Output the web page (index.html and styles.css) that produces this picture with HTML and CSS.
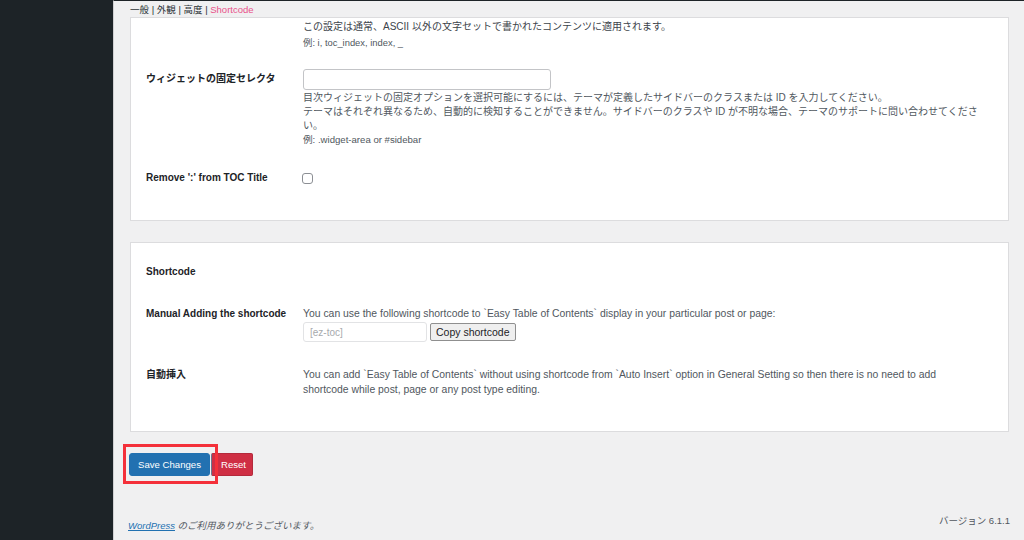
FILE: index.html
```html
<!DOCTYPE html>
<html lang="ja">
<head>
<meta charset="utf-8">
<title>Easy Table of Contents - Shortcode</title>
<link rel="stylesheet" href="styles.css">
</head>
<body>
<aside class="sidebar"></aside>
<main class="main">
  <nav class="tabs">一般 | 外観 | 高度 | <span class="tab-active">Shortcode</span></nav>

  <section class="card card-a">
    <div class="row row-cont">
      <div class="th"></div>
      <div class="td">
        <p class="desc-dark">この設定は通常、ASCII 以外の文字セットで書かれたコンテンツに適用されます。</p>
        <p class="eg">例: i, toc_index, index, _</p>
      </div>
    </div>
    <div class="row row-widget">
      <div class="th">ウィジェットの固定セレクタ</div>
      <div class="td">
        <input class="text-input wide" type="text">
        <p class="desc">目次ウィジェットの固定オプションを選択可能にするには、テーマが定義したサイドバーのクラスまたは ID を入力してください。<br>テーマはそれぞれ異なるため、自動的に検知することができません。サイドバーのクラスや ID が不明な場合、テーマのサポートに問い合わせてくださ<br>い。</p>
        <p class="eg eg-widget">例: .widget-area or #sidebar</p>
      </div>
    </div>
    <div class="row row-remove">
      <div class="th">Remove ':' from TOC Title</div>
      <div class="td"><span class="checkbox"></span></div>
    </div>
  </section>

  <section class="card card-b">
    <div class="row row-heading">
      <div class="th">Shortcode</div>
    </div>
    <div class="row row-manual">
      <div class="th">Manual Adding the shortcode</div>
      <div class="td">
        <p class="desc-mid">You can use the following shortcode to `Easy Table of Contents` display in your particular post or page:</p>
        <div class="copy-line">
          <input class="text-input short" type="text" placeholder="[ez-toc]">
          <button class="btn-copy" type="button">Copy shortcode</button>
        </div>
      </div>
    </div>
    <div class="row row-auto">
      <div class="th">自動挿入</div>
      <div class="td">
        <p class="desc-mid lh15">You can add `Easy Table of Contents` without using shortcode from `Auto Insert` option in General Setting so then there is no need to add<br>shortcode while post, page or any post type editing.</p>
      </div>
    </div>
  </section>

  <div class="submit">
    <button class="btn btn-save" type="button">Save Changes</button>
    <button class="btn btn-reset" type="button">Reset</button>
    <span class="highlight"></span>
  </div>

  <footer class="footer">
    <p class="thanks"><a href="#">WordPress</a> のご利用ありがとうございます。</p>
    <p class="version">バージョン 6.1.1</p>
  </footer>
</main>
</body>
</html>
```

FILE: styles.css
```css
* { box-sizing: border-box; }

html, body {
  margin: 0;
  height: 540px;
  overflow: hidden;
}

body {
  display: flex;
  font-family: "Liberation Sans", "Noto Sans CJK JP", sans-serif;
  font-size: 10px;
  color: #1d2327;
  background: #f0f0f1;
}

p { margin: 0; }

.sidebar {
  width: 113px;
  flex: none;
  background: #1d2327;
}

.main {
  flex: 1;
  border-left: 1px solid #d0d0d2;
  border-top: 1px solid #1d2327;
  padding: 0 15px 0 16px;
  display: flex;
  flex-direction: column;
}

.tabs {
  font-size: 9.5px;
  line-height: 14px;
  height: 16px;
  padding-top: 2px;
  color: #2c3338;
}

.tab-active { color: #e8528b; }

.card {
  background: #fff;
  border: 1px solid #dcdcde;
  padding-left: 15px;
}

.card-a { padding-bottom: 35px; }
.card-b { margin-top: 21px; padding-bottom: 34px; }

.row { display: flex; }

.th {
  width: 157px;
  flex: none;
  font-weight: bold;
  line-height: 14px;
  padding-top: 1px;
  color: #1d2327;
}

.td { flex: 1; }

.row-cont { padding-top: 2px; }

.desc-dark {
  line-height: 14px;
  color: #3c434a;
}

.eg {
  margin-top: 2px;
  font-size: 9.4px;
  line-height: 14px;
  color: #50575e;
}

.row-widget { margin-top: 19px; }
.row-widget .th { padding-top: 3px; }

.text-input {
  display: block;
  font: inherit;
  border: 1px solid #c3c4c7;
  border-radius: 3px;
  background: #fff;
  margin: 0;
}

.text-input.wide { width: 248px; height: 21px; }

.desc {
  margin-top: 1px;
  line-height: 14px;
  color: #50575e;
}

.eg-widget { margin-top: 0; font-size: 9.6px; }

.row-remove { margin-top: 23px; }

.checkbox {
  display: block;
  width: 11px;
  height: 11px;
  margin-top: 3px;
  margin-left: -1px;
  border: 1px solid #8c8f94;
  border-radius: 3px;
}

.row-heading { padding-top: 21px; }

.row-manual { margin-top: 28px; }
.row-manual .th { padding-top: 0; }

.desc-mid {
  font-size: 10.4px;
  line-height: 14px;
  color: #50575e;
}

.lh15 { line-height: 15px; }

.copy-line {
  display: flex;
  align-items: center;
  gap: 3px;
  margin-top: 1px;
}

.text-input.short {
  width: 124px;
  height: 20px;
  padding: 0 6px;
  border-color: #e2e3e5;
  color: #a7aaad;
}

.text-input.short::placeholder { color: #a7aaad; }

.btn-copy {
  height: 18px;
  padding: 0 5px;
  font: inherit;
  font-size: 10.5px;
  color: #1d2327;
  background: #efefef;
  border: 1px solid #8f8f8f;
  border-radius: 2px;
}

.row-auto { margin-top: 25px; }
.row-auto .th { padding-top: 1px; }

.submit {
  position: relative;
  display: flex;
  gap: 2px;
  margin-top: 21px;
  margin-left: -1px;
}

.btn {
  height: 23px;
  font: inherit;
  font-size: 9.6px;
  color: #fff;
  border-radius: 3px;
  padding: 0;
}

.btn-save {
  width: 81px;
  background: #2271b1;
  border: 1px solid #2271b1;
}

.btn-reset {
  width: 42px;
  margin-left: -1px;
  background: #cf2f44;
  border: 1px solid #b42a3c;
  border-left-color: #6b7690;
  border-radius: 2px;
  padding-left: 3px;
}

.highlight {
  position: absolute;
  left: -6px;
  top: -9px;
  width: 95px;
  height: 40px;
  border: 3px solid #f4303a;
  pointer-events: none;
}

.footer {
  margin-top: auto;
  display: flex;
  justify-content: space-between;
  align-items: flex-start;
  height: 26px;
  font-size: 9.5px;
  color: #50575e;
}

.thanks {
  font-style: italic;
  line-height: 14px;
  padding-top: 5px;
  margin-left: -2px;
}

.thanks a { color: #2271b1; }

.version {
  line-height: 14px;
  margin-right: -1px;
}
```
